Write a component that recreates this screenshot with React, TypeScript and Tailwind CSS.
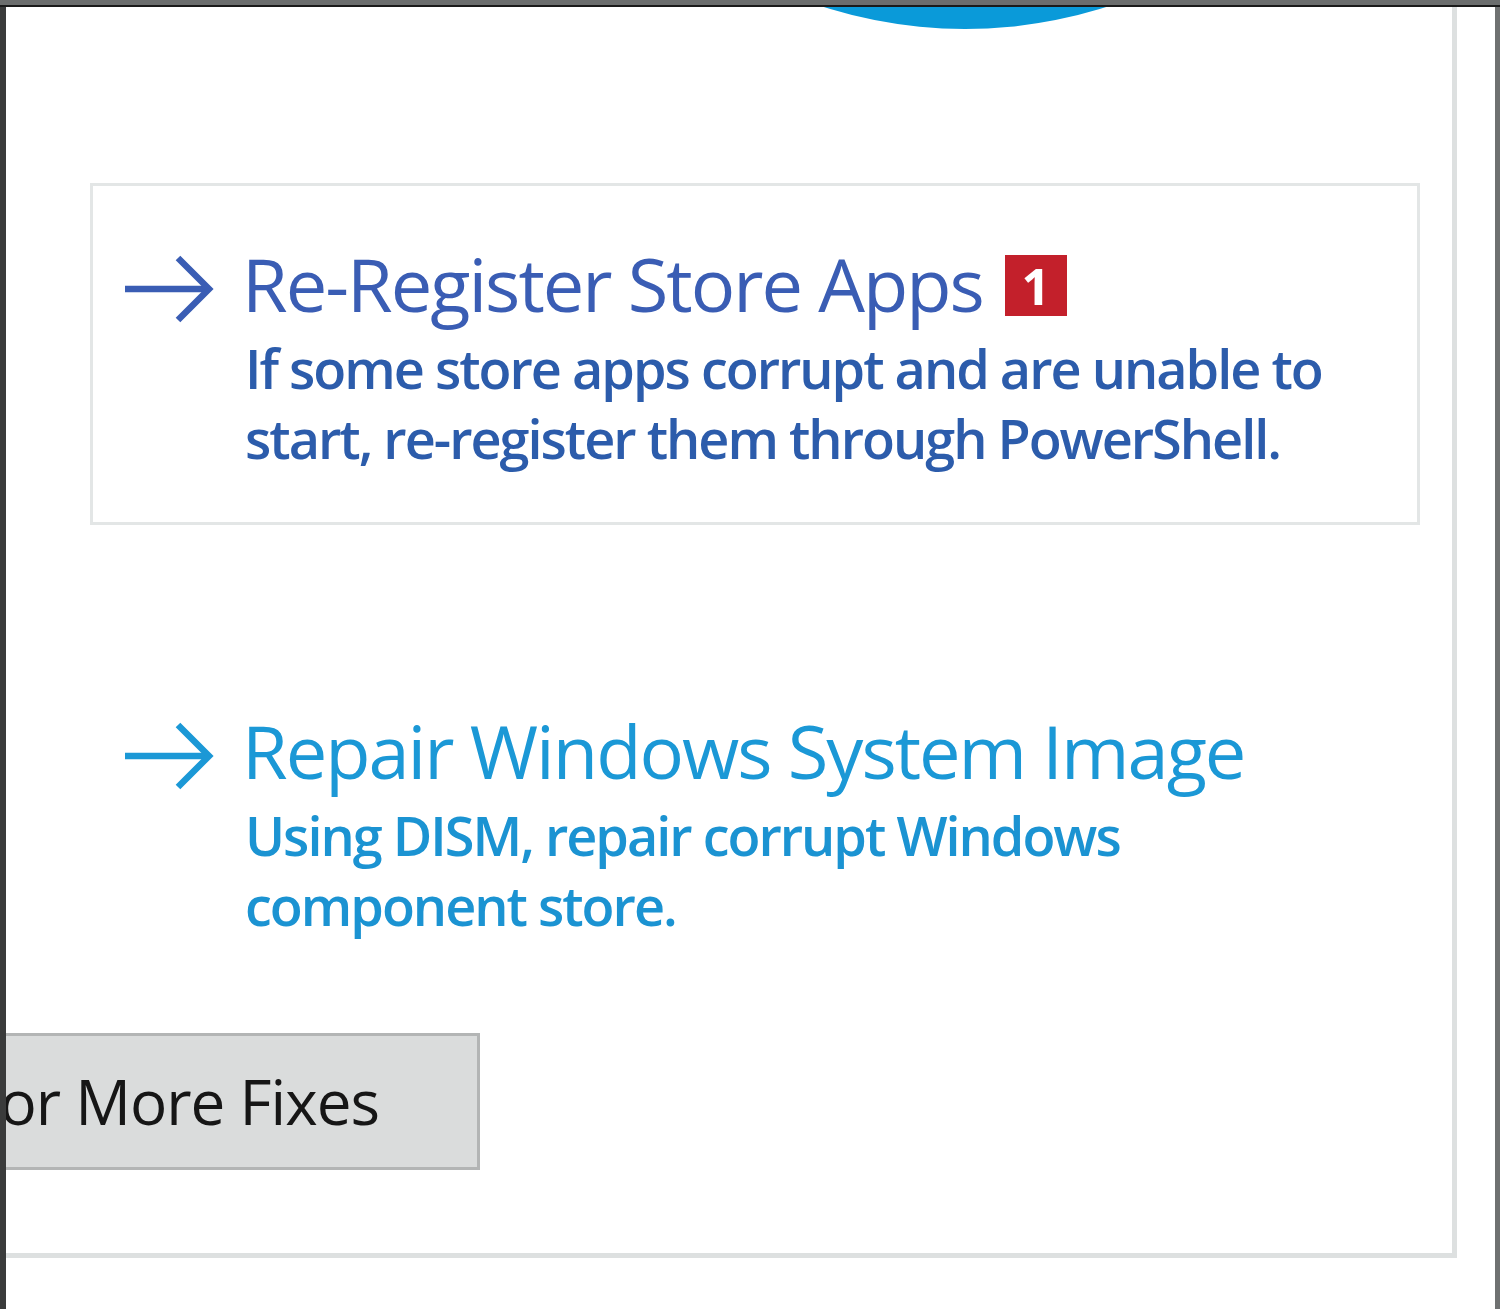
import React from 'react';

function Arrow({ color }: { color: string }) {
  return (
    <svg width="90" height="70" viewBox="0 0 90 70" className="shrink-0 mt-[13px]">
      <path d="M0 35 H83" stroke={color} strokeWidth="6.5" fill="none" />
      <path d="M53 4 L84 35 L53 66" stroke={color} strokeWidth="6.5" fill="none" strokeLinejoin="miter" />
    </svg>
  );
}

function FixItem({
  title,
  lines,
  titleColor,
  textColor,
  badge,
  hovered,
}: {
  title: string;
  lines: string[];
  titleColor: string;
  textColor: string;
  badge?: string;
  hovered?: boolean;
}) {
  return (
    <div
      className={
        'ml-[84px] w-[1330px] h-[342px] border-[3px] pl-[32px] pt-[55px] shrink-0 ' +
        (hovered ? 'border-[#e3e6e6]' : 'border-transparent')
      }
    >
      <div className="flex items-start gap-[27px]">
        <Arrow color={titleColor} />
        <div className="flex items-start gap-[22px]">
          <span
            className="text-[74px] leading-[86px] tracking-[-2px] whitespace-nowrap"
            style={{ color: titleColor }}
          >
            {title}
          </span>
          {badge && (
            <span className="w-[62px] h-[61px] bg-[#c3202b] text-white text-[50px] font-bold leading-none flex items-center justify-center mt-[14px]">
              {badge}
            </span>
          )}
        </div>
      </div>
      <div className="ml-[120px] mt-[6px]">
        {lines.map((l) => (
          <div
            key={l}
            className="text-[54px] leading-[70px] font-semibold tracking-[-2px] whitespace-nowrap"
            style={{ color: textColor }}
          >
            {l}
          </div>
        ))}
      </div>
    </div>
  );
}

export default function App() {
  return (
    <div
      className="w-[1500px] h-[1309px] bg-white overflow-hidden flex flex-col"
      style={{ fontFamily: '"Open Sans", "Noto Sans", sans-serif' }}
    >
      {/* window frame */}
      <div className="h-[5px] bg-[#6b6d6d] shrink-0" />
      <div className="h-[2px] bg-[#1a1a1a] shrink-0" />
      <div className="flex-1 flex">
        <div className="w-[6px] bg-[#3a3b3b] shrink-0" />
        <div className="flex-1 flex flex-col">
          <div className="h-[1251px] w-[1451px] border-r-[5px] border-b-[5px] border-[#dde0e0] relative overflow-hidden flex flex-col">
            {/* blue logo peeking from above */}
            <div className="absolute left-[495px] -top-[906px] w-[928px] h-[928px] rounded-full bg-[#0a9ad9]" />
            <div className="h-[176px] shrink-0" />
            <FixItem
              title="Re-Register Store Apps"
              lines={['If some store apps corrupt and are unable to', 'start, re-register them through PowerShell.']}
              titleColor="#3a5db4"
              textColor="#2c5cab"
              badge="1"
              hovered
            />
            <div className="h-[125px] shrink-0" />
            <FixItem
              title="Repair Windows System Image"
              lines={['Using DISM, repair corrupt Windows', 'component store.']}
              titleColor="#1b98d6"
              textColor="#1b93d2"
            />
            <div className="h-[41px] shrink-0" />
            <button className="-ml-[6px] w-[480px] h-[137px] shrink-0 bg-[#dadcdc] border-[3px] border-[#b3b5b5] flex items-center justify-end pr-[98px] overflow-hidden">
              <span className="text-[62px] text-[#161616] whitespace-nowrap tracking-[-1px]">Search for More Fixes</span>
            </button>
          </div>
        </div>
        <div className="w-[38px] shrink-0" />
        <div className="w-[7px] bg-[#6f7171] shrink-0" />
      </div>
    </div>
  );
}
